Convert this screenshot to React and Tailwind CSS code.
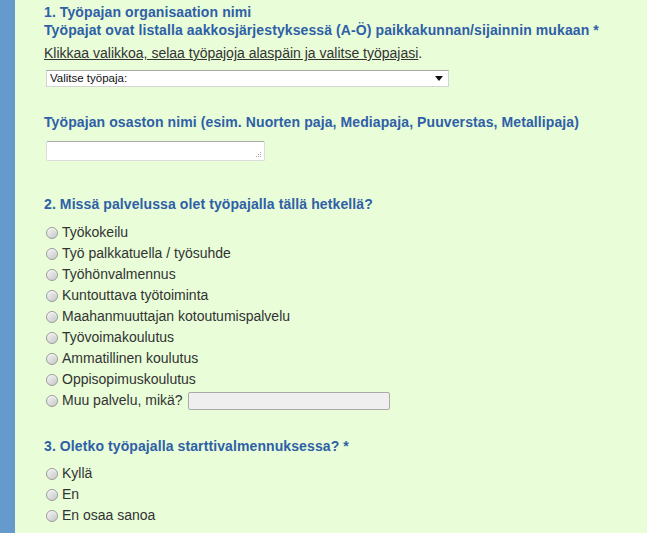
const services = [
  "Työkokeilu",
  "Työ palkkatuella / työsuhde",
  "Työhönvalmennus",
  "Kuntouttava työtoiminta",
  "Maahanmuuttajan kotoutumispalvelu",
  "Työvoimakoulutus",
  "Ammatillinen koulutus",
  "Oppisopimuskoulutus",
];

function Radio() {
  return (
    <span className="inline-block w-[12px] h-[12px] rounded-full border border-[#9a9a9a] bg-gradient-to-br from-[#f4f4f4] to-[#c8c8c8] shadow-[inset_0_1px_1px_rgba(255,255,255,0.9)] mr-[4px] shrink-0" />
  );
}

function Option({ children }) {
  return (
    <div className="flex items-center h-[21px] pl-[2px]">
      <Radio />
      <span>{children}</span>
    </div>
  );
}

export default function App() {
  return (
    <div className="flex w-[647px] h-[533px] overflow-hidden font-['Liberation_Sans',Arial,sans-serif] text-[14px] text-[#333]">
      <div className="w-[15px] bg-[#6699cc] shrink-0" />
      <main className="flex-1 bg-[#e8fdd8] pl-[29px] pt-[3px]">
        <div className="font-bold text-[#2f5fa7] leading-[18px] tracking-[0.1px]">
          <div>1. Työpajan organisaation nimi</div>
          <div>Työpajat ovat listalla aakkosjärjestyksessä (A-Ö) paikkakunnan/sijainnin mukaan *</div>
        </div>
        <div className="mt-[5px] leading-[18px]">
          <span className="underline">Klikkaa valikkoa, selaa työpajoja alaspäin ja valitse työpajasi</span>.
        </div>
        <div className="mt-[8px] ml-[2px] w-[403px] h-[17px] bg-white border border-[#d4d4d4] border-t-[#a9a9a9] flex items-center justify-between pl-[3px] pr-[5px] text-[11.5px] text-[#111] leading-none">
          <span>Valitse työpaja:</span>
          <svg width="8" height="5" viewBox="0 0 8 5"><path d="M0 0h8L4 5z" fill="#111" /></svg>
        </div>

        <div className="mt-[26px] font-bold text-[#2f5fa7] leading-[18px] tracking-[0.1px]">
          Työpajan osaston nimi (esim. Nuorten paja, Mediapaja, Puuverstas, Metallipaja)
        </div>
        <div className="relative mt-[10px] ml-[2px] w-[219px] h-[20px] bg-white border border-[#dcdcdc] border-t-[#a9a9a9] rounded-[2px]">
          <svg className="absolute right-[2px] bottom-[2px]" width="6" height="6" viewBox="0 0 6 6">
            <rect x="4" y="0" width="1" height="1" fill="#aaa" />
            <rect x="2" y="2" width="1" height="1" fill="#aaa" />
            <rect x="4" y="2" width="1" height="1" fill="#aaa" />
            <rect x="0" y="4" width="1" height="1" fill="#aaa" />
            <rect x="2" y="4" width="1" height="1" fill="#aaa" />
            <rect x="4" y="4" width="1" height="1" fill="#aaa" />
          </svg>
        </div>

        <div className="mt-[34px] font-bold text-[#2f5fa7] leading-[18px] tracking-[0.1px]">
          2. Missä palvelussa olet työpajalla tällä hetkellä?
        </div>
        <div className="mt-[9px]">
          {services.map((s) => (
            <Option key={s}>{s}</Option>
          ))}
          <div className="flex items-center h-[21px] pl-[2px]">
            <Radio />
            <span>Muu palvelu, mikä?</span>
            <span className="ml-[5px] w-[202px] h-[18px] bg-[#efefef] border border-[#aaa] rounded-[2px]" />
          </div>
        </div>

        <div className="mt-[26px] font-bold text-[#2f5fa7] leading-[18px] tracking-[0.1px]">
          3. Oletko työpajalla starttivalmennuksessa? *
        </div>
        <div className="mt-[8px]">
          <Option>Kyllä</Option>
          <Option>En</Option>
          <Option>En osaa sanoa</Option>
        </div>
      </main>
    </div>
  );
}
